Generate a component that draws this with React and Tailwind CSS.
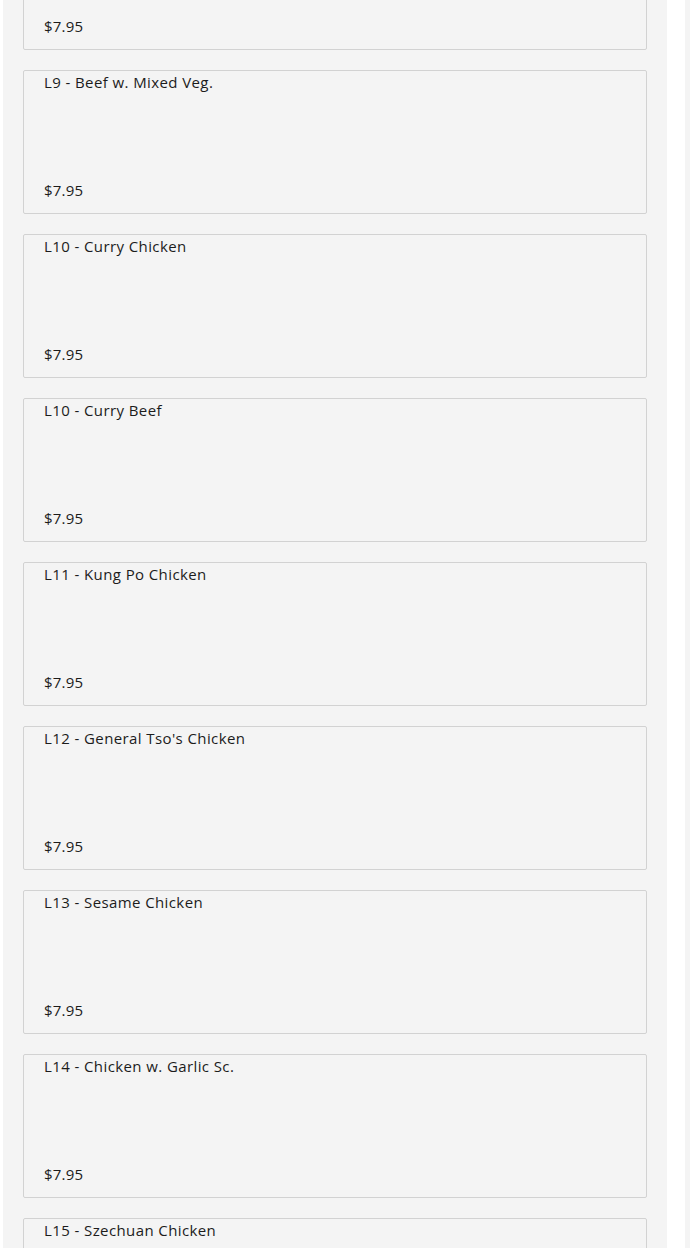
import React from "react";

const items = [
  "L8 - Chicken w. Mixed Veg.",
  "L9 - Beef w. Mixed Veg.",
  "L10 - Curry Chicken",
  "L10 - Curry Beef",
  "L11 - Kung Po Chicken",
  "L12 - General Tso's Chicken",
  "L13 - Sesame Chicken",
  "L14 - Chicken w. Garlic Sc.",
  "L15 - Szechuan Chicken",
];

export default function App() {
  return (
    <div className="h-[1248px] overflow-hidden bg-white flex" style={{ fontFamily: "'Open Sans', 'Liberation Sans', sans-serif" }}>
      <div className="ml-[3px] w-[664px] bg-[#f4f4f4] px-5">
        <div className="-mt-[94px] flex flex-col gap-5">
          {items.map((t, i) => (
            <div key={i} className="h-[144px] rounded-[2px] border border-[#d2d2d2] bg-[#f4f4f4] flex flex-col justify-between px-5 pt-[2px] pb-[14px] text-[#1c1c1c]">
              <div className="text-[15px] leading-[18px] font-medium tracking-[0.4px]">{t}</div>
              <div className="text-[15px] leading-[18px] font-medium tracking-[0.2px]">$7.95</div>
            </div>
          ))}
        </div>
      </div>
      <div className="w-[18px]" />
      <div className="w-[5px] bg-[#f4f4f4]" />
    </div>
  );
}
